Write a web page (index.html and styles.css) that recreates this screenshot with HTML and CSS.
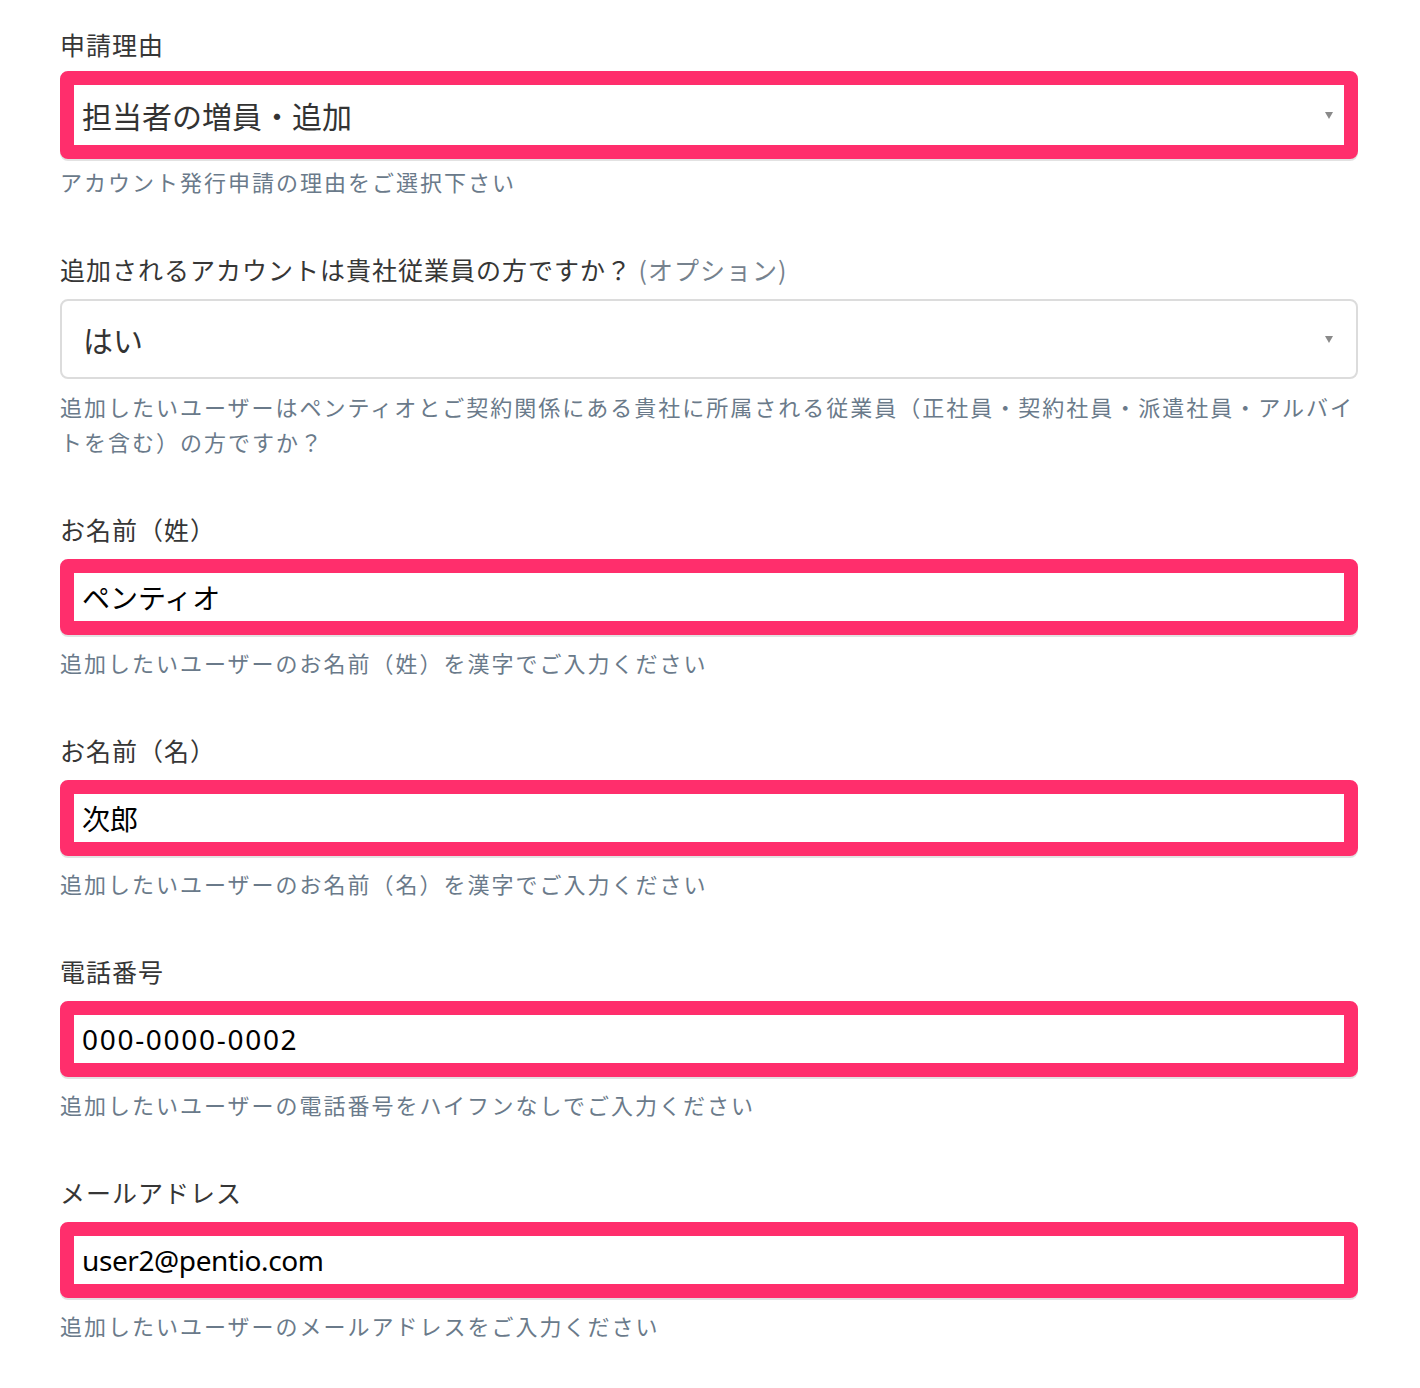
FILE: index.html
```html
<!DOCTYPE html>
<html lang="ja">
<head>
  <meta charset="UTF-8">
  <meta name="viewport" content="width=device-width, initial-scale=1.0">
  <title>アカウント発行申請</title>
  <link rel="stylesheet" href="styles.css">
</head>
<body>
  <form class="account-form">
    <div class="form-group">
      <label class="form-label" for="reason">申請理由</label>
      <div class="select-wrap select-wrap-wide">
        <select id="reason" class="form-control is-marked">
          <option>担当者の増員・追加</option>
        </select>
      </div>
      <p class="form-help">アカウント発行申請の理由をご選択下さい</p>
    </div>

    <div class="form-group">
      <label class="form-label" for="employee">追加されるアカウントは貴社従業員の方ですか？ <span class="optional">(オプション)</span></label>
      <div class="select-wrap">
        <select id="employee" class="form-control">
          <option>はい</option>
        </select>
      </div>
      <p class="form-help">追加したいユーザーはペンティオとご契約関係にある貴社に所属される従業員（正社員・契約社員・派遣社員・アルバイトを含む）の方ですか？</p>
    </div>

    <div class="form-group">
      <label class="form-label" for="last-name">お名前（姓）</label>
      <input id="last-name" class="form-control is-marked" type="text" value="ペンティオ">
      <p class="form-help">追加したいユーザーのお名前（姓）を漢字でご入力ください</p>
    </div>

    <div class="form-group">
      <label class="form-label" for="first-name">お名前（名）</label>
      <input id="first-name" class="form-control is-marked" type="text" value="次郎">
      <p class="form-help">追加したいユーザーのお名前（名）を漢字でご入力ください</p>
    </div>

    <div class="form-group">
      <label class="form-label" for="tel">電話番号</label>
      <input id="tel" class="form-control is-marked tel" type="tel" value="000-0000-0002">
      <p class="form-help">追加したいユーザーの電話番号をハイフンなしでご入力ください</p>
    </div>

    <div class="form-group">
      <label class="form-label" for="email">メールアドレス</label>
      <input id="email" class="form-control is-marked email" type="email" value="user2@pentio.com">
      <p class="form-help">追加したいユーザーのメールアドレスをご入力ください</p>
    </div>
  </form>
</body>
</html>
```

FILE: styles.css
```css
* {
  box-sizing: border-box;
}

body {
  margin: 0;
  background: #fff;
  font-family: "Noto Sans CJK JP", sans-serif;
  color: #333;
}

.account-form {
  width: 1298px;
  margin-left: 60px;
  padding-top: 27px;
}

.form-group {
  margin-bottom: 53px;
}

.form-label {
  display: block;
  font-size: 25px;
  line-height: 34px;
  letter-spacing: 1px;
  margin-bottom: 13px;
  color: #363636;
}

.form-label .optional {
  color: #76828e;
  letter-spacing: 1px;
}

.form-control {
  display: block;
  width: 100%;
  height: 76px;
  margin: 0;
  padding: 0 21px;
  border: 2px solid #dcdcdc;
  border-radius: 8px;
  background: #fff;
  font-family: "Noto Sans", "Noto Sans CJK JP", sans-serif;
  font-size: 28px;
  color: #000;
  outline: none;
}

select.form-control {
  -webkit-appearance: none;
  appearance: none;
  height: 80px;
  font-family: "Noto Sans CJK JP", sans-serif;
  font-size: 30px;
  color: #333;
}

/* 入力必須箇所のハイライト */
.form-control.is-marked {
  border: 14px solid #ff2e6c;
  padding: 0 8px;
  box-shadow: 0 2px 0 #e2e2e2;
}

.tel {
  letter-spacing: 1.7px;
}

.email {
  letter-spacing: -0.4px;
}

.select-wrap {
  position: relative;
}

.select-wrap::after {
  content: "";
  position: absolute;
  right: 25px;
  top: 50%;
  margin-top: -3px;
  border-left: 4px solid transparent;
  border-right: 4px solid transparent;
  border-top: 7px solid #8a8a8a;
  pointer-events: none;
}

.select-wrap-wide {
  margin: -3px 0 -5px;
}

.select-wrap-wide select.form-control {
  height: 88px;
}

.form-help {
  margin: 10px 0 0;
  font-size: 22px;
  line-height: 35px;
  letter-spacing: 2px;
  color: #6a7a8a;
}
```
